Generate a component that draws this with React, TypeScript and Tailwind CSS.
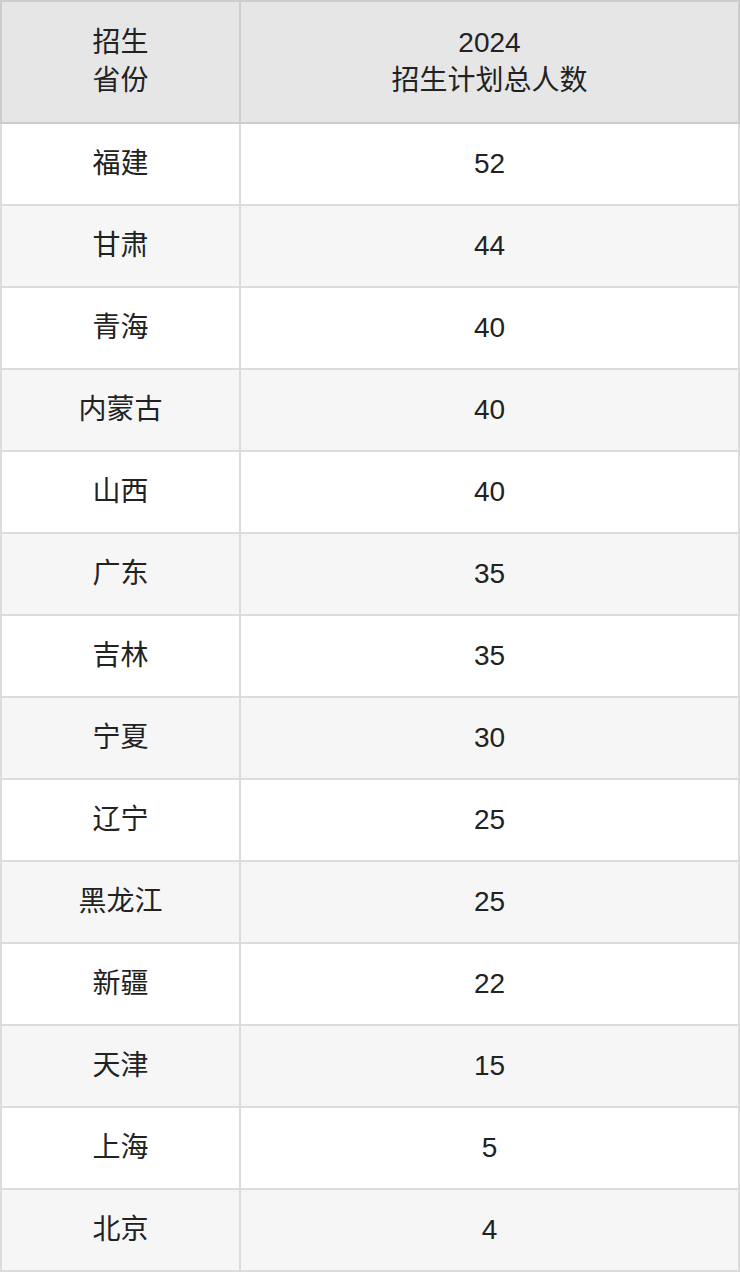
const rows: [string, string][] = [
  ["福建", "52"],
  ["甘肃", "44"],
  ["青海", "40"],
  ["内蒙古", "40"],
  ["山西", "40"],
  ["广东", "35"],
  ["吉林", "35"],
  ["宁夏", "30"],
  ["辽宁", "25"],
  ["黑龙江", "25"],
  ["新疆", "22"],
  ["天津", "15"],
  ["上海", "5"],
  ["北京", "4"],
];

export default function App() {
  return (
    <div
      className="w-[740px] bg-white text-[28px] leading-[38px] text-[#222]"
      style={{ fontFamily: '"Liberation Sans", "Noto Sans CJK SC", sans-serif' }}
    >
      <div className="flex border-2 border-[#cdcdcd] bg-[#e6e6e6]">
        <div className="flex h-[120px] w-[239px] flex-col items-center justify-center border-r-2 border-[#cdcdcd] text-center">
          <span>招生</span>
          <span>省份</span>
        </div>
        <div className="flex h-[120px] flex-1 flex-col items-center justify-center text-center">
          <span>2024</span>
          <span>招生计划总人数</span>
        </div>
      </div>
      <div className="border-x-2 border-[#dcdcdc]">
        {rows.map(([name, count], i) => (
          <div
            key={name}
            className={
              "flex h-[82px] border-b-2 border-[#dcdcdc] " +
              (i % 2 === 1 ? "bg-[#f6f6f6]" : "bg-white")
            }
          >
            <div className="flex w-[239px] items-center justify-center border-r-2 border-[#dcdcdc]">
              {name}
            </div>
            <div className="flex flex-1 items-center justify-center">{count}</div>
          </div>
        ))}
      </div>
    </div>
  );
}
